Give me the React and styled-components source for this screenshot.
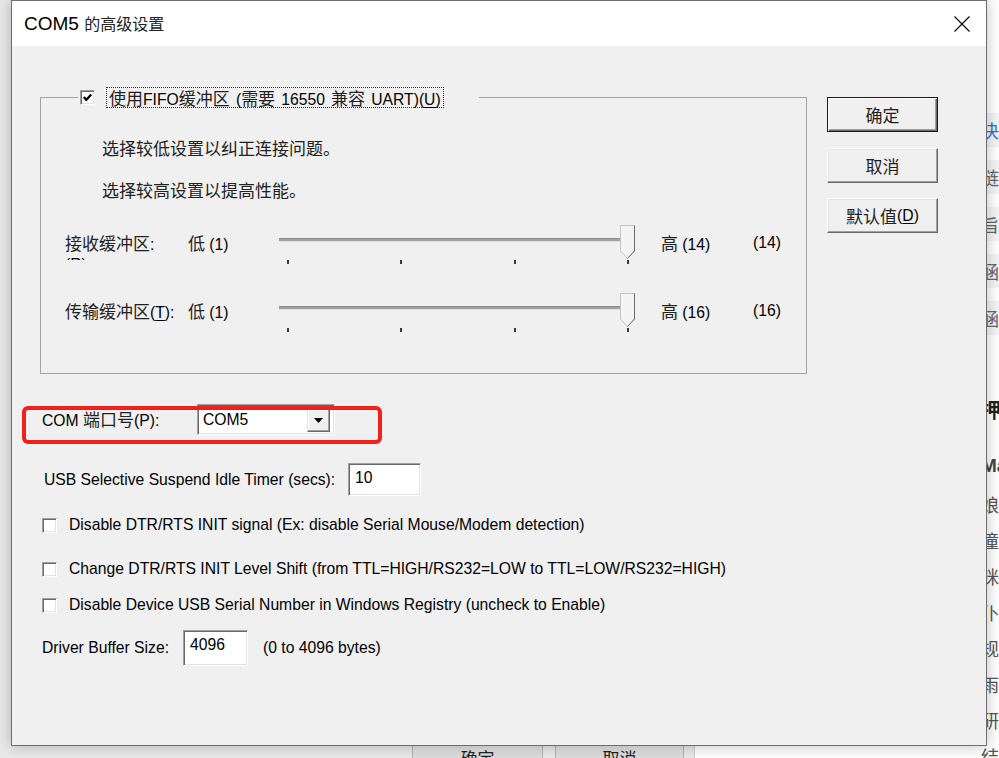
import React from "react";
import styled, { createGlobalStyle } from "styled-components";

const GlobalStyle = createGlobalStyle`
  html, body { margin: 0; padding: 0; }
  body {
    background: #e9e9e9;
    font-family: "Liberation Sans", "Noto Sans CJK SC", sans-serif;
  }
`;

const Screen = styled.div`
  position: relative;
  width: 999px;
  height: 758px;
  overflow: hidden;
  display: grid;
  grid-template-columns: 695px 1fr;
`;

/* ---------- things behind the dialog ---------- */

const OldDialog = styled.div`
  background: #e9e9e9;
  border-right: 1px solid #cfcfcf;
  display: flex;
  flex-direction: column;
  justify-content: flex-end;
  padding-left: 412px;
`;

const OldButtons = styled.div`
  display: flex;
  gap: 12px;
  height: 14px;
  overflow: hidden;
  align-items: flex-start;
`;

const OldButton = styled.div`
  width: ${(p) => p.$w}px;
  height: 30px;
  box-sizing: border-box;
  border: 1px solid #b4b4b4;
  background: linear-gradient(#e2e2e2, #d3d3d3);
  padding-top: 3px;
  text-align: center;
  font-family: "Noto Sans CJK SC", sans-serif;
  font-size: 17px;
  line-height: 20px;
  color: #222;
`;

const WebPage = styled.div`
  background: #fff;
  overflow: hidden;
  padding-left: 286px;
  display: flex;
  flex-direction: column;
  font-family: "Noto Sans CJK SC", sans-serif;
  color: #555;
  white-space: nowrap;
`;

const Bands = styled.div`
  margin-top: 113px;
  display: flex;
  flex-direction: column;
  gap: 13px;
  margin-left: -40px;
`;

const Band = styled.div`
  height: 34px;
  line-height: 34px;
  padding-left: 40px;
  background: #f3f4f6;
  font-size: 18px;
  color: ${(p) => (p.$link ? "#2f6fce" : "#666")};
`;

const WebRule = styled.div`
  margin: 38px 0 0 -40px;
  height: 1px;
  background: #e6e6e6;
`;

const WebHeading = styled.div`
  margin-top: 26px;
  font-size: 20px;
  line-height: 22px;
  font-weight: 700;
  color: #222;
`;

const WebSub = styled.div`
  margin-top: 34px;
  font-family: "Liberation Sans", sans-serif;
  font-size: 19px;
  line-height: 22px;
  font-weight: 700;
  color: #444;
`;

const WebLines = styled.div`
  margin-top: 9px;
  display: flex;
  flex-direction: column;
  font-size: 18px;
  line-height: 36px;
`;

/* ---------- the dialog ---------- */

const Dialog = styled.div`
  position: absolute;
  left: 11px;
  top: 0;
  width: 976px;
  height: 746px;
  box-sizing: border-box;
  border: 1px solid #6e6e6e;
  background: #f0f0f0;
  box-shadow: 0 0 14px rgba(0, 0, 0, 0.25);
  display: flex;
  flex-direction: column;
  font-family: "Liberation Sans", "Noto Sans CJK SC", sans-serif;
  font-size: 15.7px;
  color: #000;
`;

const TitleBar = styled.div`
  height: 45px;
  flex: 0 0 45px;
  background: #fff;
  display: flex;
  align-items: center;
  justify-content: space-between;
  padding: 0 16px 0 12px;
`;

const Title = styled.div`
  font-size: 19px;
  line-height: 24px;
  color: #000;
`;

const Zh = styled.span`
  font-family: "Noto Sans CJK SC", sans-serif;
  font-size: ${(p) => p.$size || 17}px;
  color: #222;
`;

const Key = styled.span`
  text-decoration: underline;
  text-underline-offset: 2px;
`;

const Body = styled.div`
  flex: 1;
  padding: 40px 0 0 28px;
  display: flex;
  flex-direction: column;
`;

const TopArea = styled.div`
  display: flex;
  align-items: flex-start;
`;

const GroupBox = styled.fieldset`
  margin: 0;
  min-width: 0;
  width: 767px;
  height: 288px;
  box-sizing: border-box;
  border: 1px solid #a3a3a3;
  padding: 0 0 0 24px;
`;

const Legend = styled.legend`
  margin-left: 13px;
  padding: 0 35px 0 2px;
  height: 22px;
`;

const LegendInner = styled.span`
  display: inline-flex;
  align-items: center;
  gap: 11px;
  height: 22px;
`;

const CheckBox = styled.span`
  display: inline-flex;
  align-items: center;
  justify-content: center;
  width: 15px;
  height: 15px;
  box-sizing: border-box;
  background: #fff;
  border: 1px solid;
  border-color: #a0a0a0 #fff #fff #a0a0a0;
  box-shadow: inset 1px 1px #696969, inset -1px -1px #e3e3e3;
  flex: 0 0 15px;
`;

const FocusLabel = styled.span`
  height: 21px;
  box-sizing: border-box;
  border: 1px dotted #333;
  padding: 0 2px;
  line-height: 19px;
  white-space: nowrap;
  word-spacing: 1.8px;
`;

const Hint = styled.div`
  margin: ${(p) => p.$top}px 0 0 37px;
  line-height: 20px;
`;

const SliderRow = styled.div`
  margin-top: ${(p) => p.$top}px;
  height: 40px;
  display: grid;
  grid-template-columns: 123px 91px 358px 116px auto;
  align-items: start;
`;

const RowLabel = styled.div`
  margin-top: 8px;
  line-height: 20px;
  white-space: nowrap;
  height: ${(p) => (p.$clip ? "27px" : "auto")};
  overflow: hidden;
`;

const HighLabel = styled(RowLabel)`
  padding-left: 24px;
`;

const SliderBox = styled.div`
  position: relative;
  height: 40px;
`;

const Track = styled.div`
  margin-top: 13px;
  width: 351px;
  height: 2px;
  background: #a2a2a2;
  border-top: 1px solid #8a8a8a;
  border-bottom: 1px solid #dedede;
`;

const Ticks = styled.div`
  margin: 18px 0 0 8px;
  width: 342px;
  display: flex;
  justify-content: space-between;
`;

const Tick = styled.span`
  width: 2px;
  height: 4px;
  background: #3a3a3a;
`;

const Thumb = styled.svg`
  position: absolute;
  left: 341px;
  top: 0;
`;

const ButtonColumn = styled.div`
  margin: 11px 0 0 20px;
  display: flex;
  flex-direction: column;
  gap: 15.5px;
`;

const DialogButton = styled.div`
  width: 111px;
  height: 35px;
  box-sizing: border-box;
  display: flex;
  align-items: center;
  justify-content: center;
  background: #f0f0f0;
  border: 1px solid;
  border-color: ${(p) => (p.$default ? "#1a1a1a" : "#fff #696969 #696969 #fff")};
  box-shadow: ${(p) =>
    p.$default
      ? "inset 1px 1px #fff, inset -1px -1px #696969, inset -2px -2px #a0a0a0"
      : "inset -1px -1px #a0a0a0, inset 1px 1px #e3e3e3"};
  white-space: nowrap;
`;

const ComRow = styled.div`
  position: relative;
  margin: 30px 0 0 2px;
  height: 31px;
  display: flex;
  align-items: center;
  &::after {
    content: "";
    position: absolute;
    left: -20px;
    top: 2px;
    width: 360px;
    height: 38px;
    box-sizing: border-box;
    border: 4px solid #f2201b;
    border-radius: 6px;
    pointer-events: none;
  }
`;

const FieldLabel = styled.div`
  flex: 0 0 ${(p) => p.$w}px;
  white-space: nowrap;
  line-height: 20px;
`;

const Combo = styled.div`
  width: 138px;
  height: 31px;
  box-sizing: border-box;
  background: #fff;
  border: 1px solid;
  border-color: #a0a0a0 #fff #fff #a0a0a0;
  box-shadow: inset 1px 1px #696969, inset -1px -1px #e3e3e3;
  display: flex;
  align-items: flex-end;
  justify-content: space-between;
  padding: 0 4px 2px 5px;
`;

const ComboText = styled.span`
  align-self: center;
  line-height: 20px;
  padding-top: 2px;
`;

const ComboButton = styled.span`
  width: 23px;
  height: 23px;
  box-sizing: border-box;
  background: #f0f0f0;
  border: 1px solid;
  border-color: #e3e3e3 #696969 #696969 #e3e3e3;
  box-shadow: inset -1px -1px #a0a0a0, inset 1px 1px #fff;
  display: flex;
  align-items: center;
  justify-content: center;
`;

const FormRow = styled.div`
  margin: ${(p) => p.$top}px 0 0 ${(p) => p.$left || 2}px;
  height: ${(p) => p.$h}px;
  display: flex;
  align-items: center;
`;

const TextBox = styled.div`
  width: ${(p) => p.$w}px;
  height: ${(p) => p.$h}px;
  box-sizing: border-box;
  background: #fff;
  border: 1px solid;
  border-color: #a0a0a0 #fff #fff #a0a0a0;
  box-shadow: inset 1px 1px #696969, inset -1px -1px #e3e3e3;
  padding: 4px 0 0 6px;
  line-height: 20px;
`;

const Note = styled.span`
  margin-left: 15px;
`;

const CheckRow = styled.div`
  margin: ${(p) => p.$top}px 0 0 2px;
  height: 20px;
  display: flex;
  align-items: center;
  gap: 12px;
  white-space: nowrap;
`;

const CheckMark = () => (
  <svg width="11" height="11" viewBox="0 0 11 11">
    <path d="M1.8 5 L4.3 7.8 L9.2 2.4" fill="none" stroke="#000" strokeWidth="2.2" />
  </svg>
);

const CloseIcon = () => (
  <svg width="16" height="16" viewBox="0 0 16 16">
    <path d="M0.5 0.5 L15.5 15.5 M15.5 0.5 L0.5 15.5" stroke="#000" strokeWidth="1.1" />
  </svg>
);

const Slider = () => (
  <SliderBox>
    <Track />
    <Ticks>
      {[0, 1, 2, 3].map((i) => (
        <Tick key={i} />
      ))}
    </Ticks>
    <Thumb width="16" height="35" viewBox="0 0 16 35">
      <polygon points="0.5,0.5 14.5,0.5 14.5,26 7.5,33.5 0.5,26" fill="#f4f4f4" stroke="#c4c4c4" />
      <polyline points="14.5,0.5 14.5,26 7.5,33.5" fill="none" stroke="#6d6d6d" />
    </Thumb>
  </SliderBox>
);

const bands = ["决定", "链接", "旨在", "涵盖", "涵义"];
const lines = ["娘家", "僮仆", "咪咪", "仆人", "规则", "雨天", "研究", "结束"];

const App = () => (
  <>
    <GlobalStyle />
    <Screen>
      <OldDialog>
        <OldButtons>
          <OldButton $w={131}>确定</OldButton>
          <OldButton $w={129}>取消</OldButton>
        </OldButtons>
      </OldDialog>

      <WebPage>
        <Bands>
          {bands.map((b, i) => (
            <Band key={b} $link={i === 0}>
              {b}
            </Band>
          ))}
        </Bands>
        <WebRule />
        <WebHeading>押实</WebHeading>
        <WebSub>Mac</WebSub>
        <WebLines>
          {lines.map((l) => (
            <span key={l}>{l}</span>
          ))}
        </WebLines>
      </WebPage>

      <Dialog>
        <TitleBar>
          <Title>
            COM5 <Zh $size={16}>的高级设置</Zh>
          </Title>
          <CloseIcon />
        </TitleBar>

        <Body>
          <TopArea>
            <GroupBox>
              <Legend>
                <LegendInner>
                  <CheckBox>
                    <CheckMark />
                  </CheckBox>
                  <FocusLabel>
                    <Zh>使用</Zh>FIFO<Zh>缓冲区</Zh> (<Zh>需要</Zh> 16550 <Zh>兼容</Zh> UART)(<Key>U</Key>)
                  </FocusLabel>
                </LegendInner>
              </Legend>

              <Hint $top={30}>
                <Zh>选择较低设置以纠正连接问题。</Zh>
              </Hint>
              <Hint $top={20}>
                <Zh>选择较高设置以提高性能。</Zh>
              </Hint>

              <SliderRow $top={23}>
                <RowLabel $clip>
                  <Zh>接收缓冲区</Zh>:
                  <br />(<Key>R</Key>)
                </RowLabel>
                <RowLabel>
                  <Zh>低</Zh> (1)
                </RowLabel>
                <Slider />
                <HighLabel>
                  <Zh>高</Zh> (14)
                </HighLabel>
                <RowLabel>(14)</RowLabel>
              </SliderRow>

              <SliderRow $top={28}>
                <RowLabel>
                  <Zh>传输缓冲区</Zh>(<Key>T</Key>):
                </RowLabel>
                <RowLabel>
                  <Zh>低</Zh> (1)
                </RowLabel>
                <Slider />
                <HighLabel>
                  <Zh>高</Zh> (16)
                </HighLabel>
                <RowLabel>(16)</RowLabel>
              </SliderRow>
            </GroupBox>

            <ButtonColumn>
              <DialogButton $default>
                <Zh>确定</Zh>
              </DialogButton>
              <DialogButton>
                <Zh>取消</Zh>
              </DialogButton>
              <DialogButton>
                <Zh>默认值</Zh>(<Key>D</Key>)
              </DialogButton>
            </ButtonColumn>
          </TopArea>

          <ComRow>
            <FieldLabel $w={155}>
              COM <Zh>端口号</Zh>(P):
            </FieldLabel>
            <Combo>
              <ComboText>COM5</ComboText>
              <ComboButton>
                <svg width="9" height="5" viewBox="0 0 9 5">
                  <path d="M0 0 H9 L4.5 5 Z" fill="#000" />
                </svg>
              </ComboButton>
            </Combo>
          </ComRow>

          <FormRow $top={28} $left={4} $h={33}>
            <FieldLabel $w={304}>USB Selective Suspend Idle Timer (secs):</FieldLabel>
            <TextBox $w={73} $h={33}>10</TextBox>
          </FormRow>

          <CheckRow $top={19}>
            <CheckBox />
            <span>Disable DTR/RTS INIT signal (Ex: disable Serial Mouse/Modem detection)</span>
          </CheckRow>
          <CheckRow $top={24}>
            <CheckBox />
            <span>Change DTR/RTS INIT Level Shift (from TTL=HIGH/RS232=LOW to TTL=LOW/RS232=HIGH)</span>
          </CheckRow>
          <CheckRow $top={16}>
            <CheckBox />
            <span>Disable Device USB Serial Number in Windows Registry (uncheck to Enable)</span>
          </CheckRow>

          <FormRow $top={15} $h={36}>
            <FieldLabel $w={141}>Driver Buffer Size:</FieldLabel>
            <TextBox $w={65} $h={36}>4096</TextBox>
            <Note>(0 to 4096 bytes)</Note>
          </FormRow>
        </Body>
      </Dialog>
    </Screen>
  </>
);

export default App;
